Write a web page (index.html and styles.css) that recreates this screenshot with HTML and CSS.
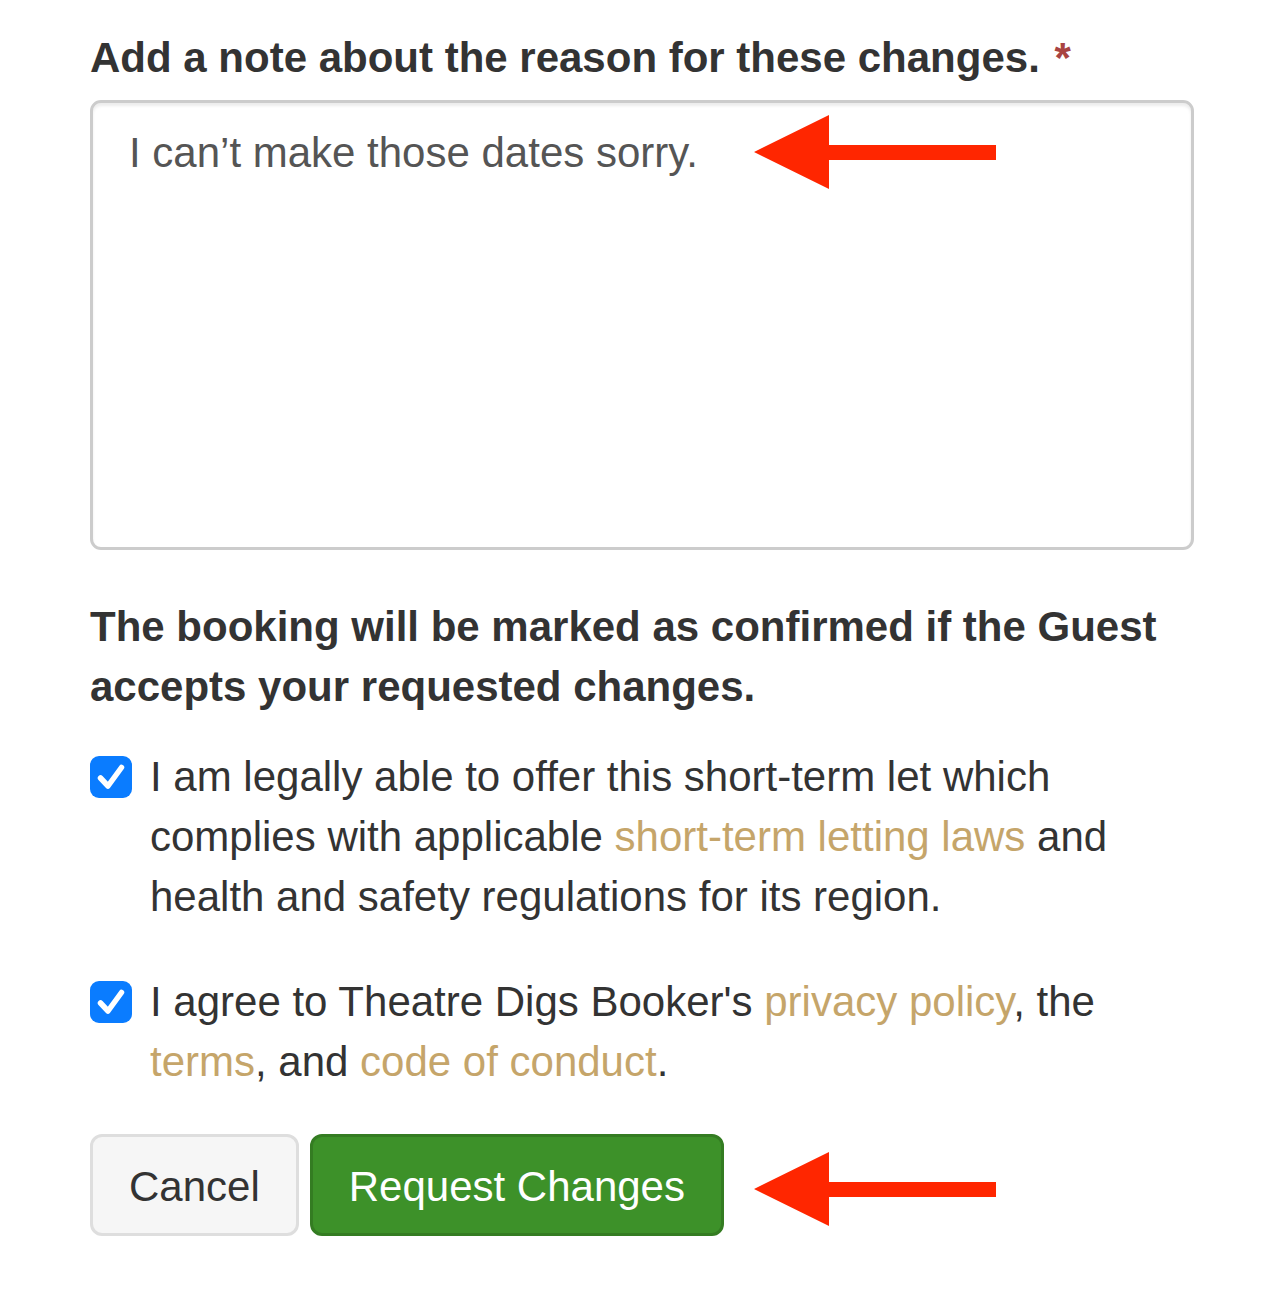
FILE: index.html
```html
<!DOCTYPE html>
<html>
<head>
<meta charset="utf-8">
<link rel="stylesheet" href="styles.css">
</head>
<body>
<div class="page">
  <form class="form">
    <div class="form-group">
      <label class="label" for="note">Add a note about the reason for these changes. <span class="req">*</span></label>
      <textarea id="note" class="textarea">I can’t make those dates sorry.</textarea>
    </div>
    <p class="notice">The booking will be marked as confirmed if the Guest accepts your requested changes.</p>
    <div class="check first">
      <span class="box"><svg viewBox="0 0 42 42" width="42" height="42"><path d="M10.5 22 L18 30 L31.5 11.5" fill="none" stroke="#fff" stroke-width="5.5" stroke-linecap="round" stroke-linejoin="round"/></svg></span>
      <span class="check-text">I am legally able to offer this short-term let which complies with applicable <a class="link">short-term letting laws</a> and health and safety regulations for its region.</span>
    </div>
    <div class="check second">
      <span class="box"><svg viewBox="0 0 42 42" width="42" height="42"><path d="M10.5 22 L18 30 L31.5 11.5" fill="none" stroke="#fff" stroke-width="5.5" stroke-linecap="round" stroke-linejoin="round"/></svg></span>
      <span class="check-text">I agree to Theatre Digs Booker's <a class="link">privacy policy</a>, the <a class="link">terms</a>, and <a class="link">code of conduct</a>.</span>
    </div>
    <div class="actions">
      <button type="button" class="btn btn-default">Cancel</button>
      <button type="button" class="btn btn-success">Request Changes</button>
    </div>
  </form>
  <svg class="arrow arrow-top" width="244" height="76" viewBox="0 0 244 76"><polygon points="0,37 75,0 75,30 242,30 242,45 75,45 75,74" fill="#ff2600"/></svg>
  <svg class="arrow arrow-bottom" width="244" height="76" viewBox="0 0 244 76"><polygon points="0,37 75,0 75,30 242,30 242,45 75,45 75,74" fill="#ff2600"/></svg>
</div>
</body>
</html>
```
FILE: styles.css
```css
html, body {
  margin: 0;
  padding: 0;
  background: #fff;
}
.page {
  position: relative;
  width: 1284px;
  min-height: 1296px;
  box-sizing: border-box;
  padding: 28px 90px 0 90px;
  font-family: "Liberation Sans", Arial, Helvetica, sans-serif;
  font-size: 42px;
  line-height: 60px;
  color: #333;
}
.form {
  width: 1104px;
  margin: 0;
}
.form-group {
  margin-bottom: 45px;
}
.label {
  display: block;
  font-weight: bold;
  margin-bottom: 12px;
}
.req {
  color: #a94442;
  margin-left: 3px;
}
.textarea {
  display: block;
  width: 1104px;
  height: 450px;
  box-sizing: border-box;
  margin: 0;
  padding: 20px 36px 16px 36px;
  border: 3px solid #ccc;
  border-radius: 11px;
  box-shadow: inset 0 3px 3px rgba(0, 0, 0, 0.075);
  font-family: "Liberation Sans", Arial, Helvetica, sans-serif;
  font-size: 42px;
  line-height: 60px;
  color: #555;
  resize: none;
  outline: none;
}
.notice {
  margin: 0 0 30px 0;
  padding-top: 2px;
  font-weight: bold;
}
.check {
  display: flex;
  align-items: flex-start;
  gap: 18px;
}
.check.second {
  margin-top: 45px;
}
.box {
  flex: 0 0 42px;
  width: 42px;
  height: 42px;
  margin-top: 9px;
  border-radius: 9px;
  background: #0a7cff;
  display: flex;
}
.check-text {
  flex: 1;
}
.link {
  color: #c5a56a;
  text-decoration: none;
}
.actions {
  display: flex;
  gap: 11px;
  margin-top: 42px;
}
.btn {
  box-sizing: border-box;
  height: 102px;
  padding: 20px 36px 16px 36px;
  border: 3px solid;
  border-radius: 12px;
  font-family: "Liberation Sans", Arial, Helvetica, sans-serif;
  font-size: 42px;
  line-height: 60px;
  cursor: pointer;
}
.btn-default {
  background: #f6f6f6;
  border-color: #dedede;
  color: #333;
}
.btn-success {
  background: #3d9129;
  border-color: #347c22;
  color: #fff;
}
.arrow {
  position: absolute;
  left: 754px;
}
.arrow-top {
  top: 115px;
}
.arrow-bottom {
  top: 1152px;
}
```
